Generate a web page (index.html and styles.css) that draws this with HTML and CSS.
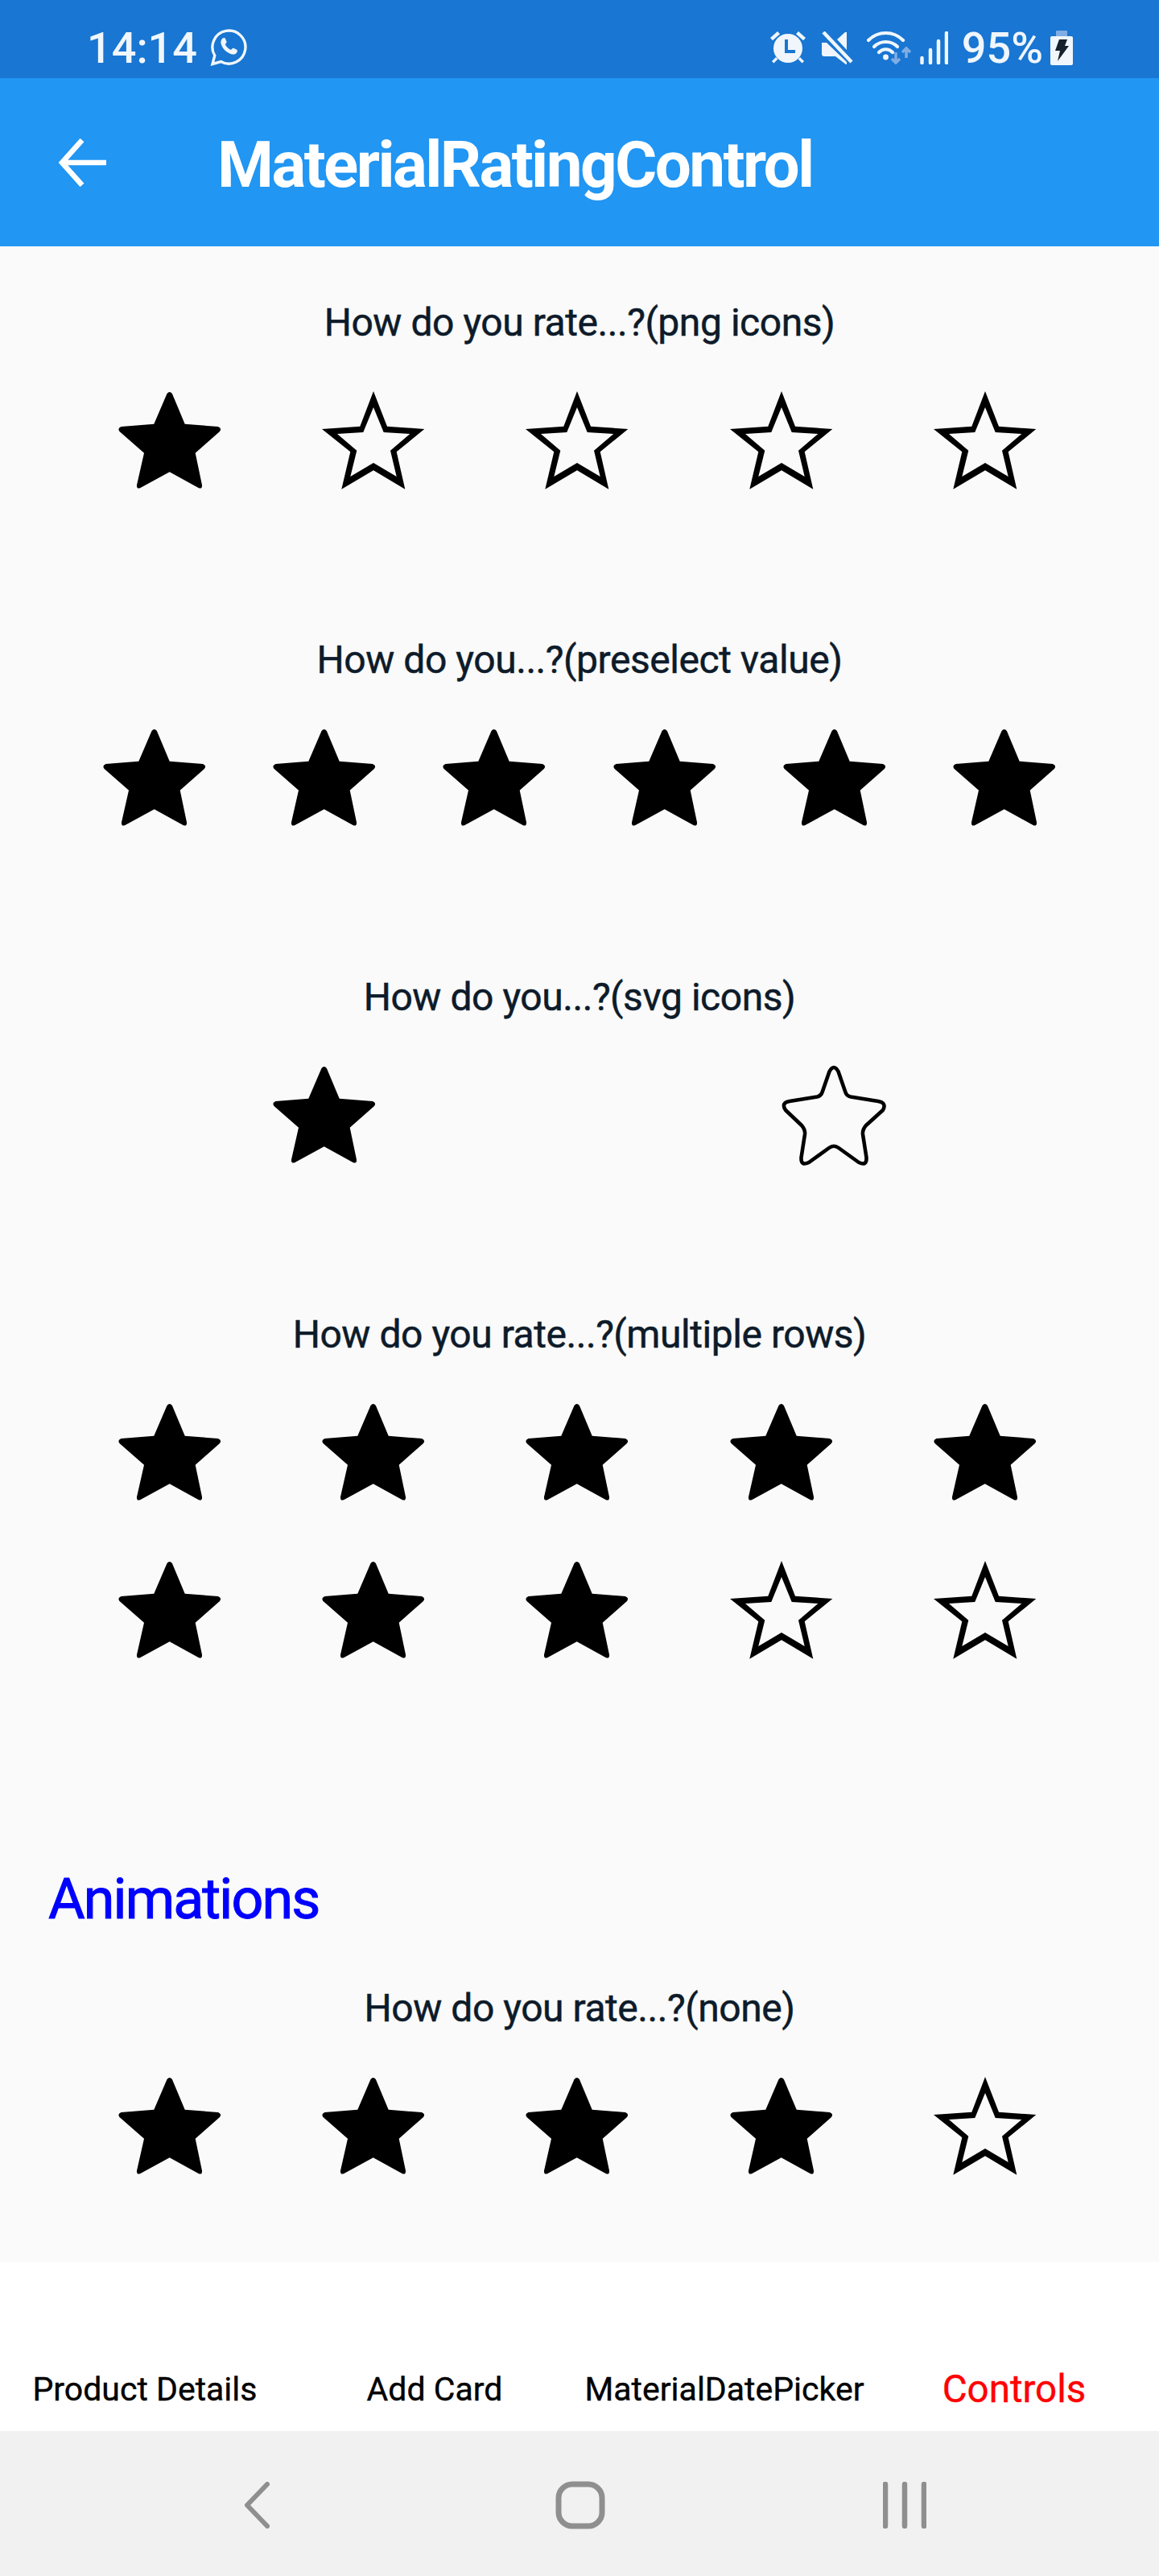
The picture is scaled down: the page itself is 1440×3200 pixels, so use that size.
FILE: index.html
```html
<!DOCTYPE html>
<html lang="en">
<head>
<meta charset="utf-8">
<title>MaterialRatingControl</title>
<link rel="stylesheet" href="styles.css">
</head>
<body>
<svg class="defs" width="0" height="0" aria-hidden="true">
  <symbol id="star-filled" viewBox="0 0 128 121" overflow="visible">
    <path d="M60.5 3Q63.7-1 66.9 3L82.7 40.7 124 44Q129 46 126 50L95.7 76.7 104 116.5Q104.5 122 99.5 120L63.7 100.3 27.5 120Q22.5 122 23 116.5L32 76.7 1.5 50Q-1.5 46 3.5 44L44.3 40.7Z"/>
  </symbol>
  <symbol id="star-outline" viewBox="0 0 128 121" overflow="visible">
    <path fill-rule="evenodd" d="M64 0 81 43.7 127.3 47 92.7 75.3 103.3 121.7 64 98.3 24.3 121.7 35.3 75.3 0 47 47.3 43.7ZM64 20 51.3 51 19 53 43.3 73.7 35.3 106 64 89 92.7 106 85 73.7 109.3 53 76.7 51Z"/>
  </symbol>
  <symbol id="star-svg" viewBox="0 0 128 121" overflow="visible">
    <path fill="none" stroke="#000" stroke-width="4.6" stroke-linejoin="round" d="M57.5 7Q63-3 68.5 7L77.5 33Q79 37.5 84 38.5L118 44Q129 46 124 55L103 74Q98.5 79 99 85L103.5 114Q104 125 94 120L69 102Q63 97.5 57 102L32 120Q22 125 22.500 114L27 85Q27.500 79 23 74L3 55Q-3 46 8 44L42 38.500Q47 37.500 48.500 33Z"/>
  </symbol>
</svg>

<header class="status-bar">
  <div class="status-left">
    <span class="status-text">14:14</span>
    <svg class="icon-whatsapp" viewBox="0 0 46 46"><path fill="none" stroke="#f0f6fc" stroke-width="3.400" d="M3 43.500l2.800-10.500A20.500 20.500 0 1 1 13.500 40.500Z"/><path fill="#f0f6fc" d="M15.500 11.500c1.500-1 3-.8 3.600.8l1.300 3.300c.3.800 0 1.500-.5 2.100l-1.200 1.300c1.600 3.200 3.800 5.400 7.300 7l1.500-1.700c.6-.6 1.300-.7 2-.4l3.300 1.600c1 .5 1.300 1.300 1 2.400-.8 2.800-3.600 4.200-6.400 3.500-6.800-1.800-11.800-6.600-13.800-13-.7-2.700 0-5.200 1.900-6.700Z"/></svg>
  </div>
  <div class="status-right">
    <svg class="icon-alarm" viewBox="0 0 44 40"><g fill="#f0f6fc"><circle cx="22" cy="21" r="18"/><path d="M0 8 9 0l3 3.200-9 8ZM44 8 35 0l-3 3.200 9 8ZM2 37l5-5 2.400 2.600-5 5ZM42 37l-5-5-2.400 2.600 5 5Z"/></g><path fill="none" stroke="#1976d2" stroke-width="4" d="M20 10v15h11"/></svg>
    <svg class="icon-mute" viewBox="0 0 39 41"><path fill="#f0f6fc" d="M0 14h6l25 24v3l-1 0-13-10H3q-3 0-3-3ZM19 10 29 1h2v22Z"/><path fill="none" stroke="#f0f6fc" stroke-width="4.500" d="M2 1 37 38"/></svg>
    <svg class="icon-wifi" viewBox="0 0 56 42"><g fill="none" stroke="#f0f6fc" stroke-width="4.200" stroke-linecap="round"><path d="M2 12C14 0 33 0 45 12"/><path d="M9 20c8-8 21-8 29 0"/><path d="M15 27c5-5 12-5 17 0"/></g><circle cx="23.500" cy="33" r="3.400" fill="#f0f6fc"/><g fill="none" stroke="#80ade4" stroke-width="3.500"><path d="M36 27v13M31 35l5 5 5-5"/><path d="M49 34V22M44 27l5-5 5 5"/></g></svg>
    <svg class="icon-signal" viewBox="0 0 35 41"><g fill="none" stroke="#f0f6fc" stroke-width="4.500" stroke-linecap="round"><path d="M2.500 33v6M13 23v16M23 12v27M33 2v37"/></g></svg>
    <span class="status-text battery-text">95%</span>
    <svg class="icon-battery" viewBox="0 0 28 43"><path fill="#80ade4" d="M8 0h12q1 0 1 1v6H7V1q0-1 1-1Z"/><path fill="#f0f6fc" d="M2 7h24q2 0 2 2v32q0 2-2 2H2q-2 0-2-2V9q0-2 2-2Z"/><path fill="#16202c" d="M11 11h10l-3 8h5L9 38l3-13H6Z"/></svg>
  </div>
</header>

<div class="app-bar">
  <svg class="icon-back" viewBox="0 0 60 60"><path fill="none" stroke="#fff" stroke-width="6.500" d="M60 30H5M30 2 5 30l25 28" stroke-linejoin="miter"/></svg>
  <h1 class="title">MaterialRatingControl</h1>
</div>

<main class="content">
  <section class="rating">
    <p class="question">How do you rate...?(png icons)</p>
    <div class="stars five">
      <span class="cell"><svg class="star"><use href="#star-filled"/></svg></span>
      <span class="cell"><svg class="star"><use href="#star-outline"/></svg></span>
      <span class="cell"><svg class="star"><use href="#star-outline"/></svg></span>
      <span class="cell"><svg class="star"><use href="#star-outline"/></svg></span>
      <span class="cell"><svg class="star"><use href="#star-outline"/></svg></span>
    </div>
  </section>
  <section class="rating">
    <p class="question">How do you...?(preselect value)</p>
    <div class="stars six">
      <span class="cell"><svg class="star"><use href="#star-filled"/></svg></span>
      <span class="cell"><svg class="star"><use href="#star-filled"/></svg></span>
      <span class="cell"><svg class="star"><use href="#star-filled"/></svg></span>
      <span class="cell"><svg class="star"><use href="#star-filled"/></svg></span>
      <span class="cell"><svg class="star"><use href="#star-filled"/></svg></span>
      <span class="cell"><svg class="star"><use href="#star-filled"/></svg></span>
    </div>
  </section>
  <section class="rating">
    <p class="question">How do you...?(svg icons)</p>
    <div class="stars two">
      <span class="cell"><svg class="star"><use href="#star-filled"/></svg></span>
      <span class="cell"><svg class="star"><use href="#star-svg"/></svg></span>
    </div>
  </section>
  <section class="rating">
    <p class="question">How do you rate...?(multiple rows)</p>
    <div class="stars five">
      <span class="cell"><svg class="star"><use href="#star-filled"/></svg></span>
      <span class="cell"><svg class="star"><use href="#star-filled"/></svg></span>
      <span class="cell"><svg class="star"><use href="#star-filled"/></svg></span>
      <span class="cell"><svg class="star"><use href="#star-filled"/></svg></span>
      <span class="cell"><svg class="star"><use href="#star-filled"/></svg></span>
      <span class="cell"><svg class="star"><use href="#star-filled"/></svg></span>
      <span class="cell"><svg class="star"><use href="#star-filled"/></svg></span>
      <span class="cell"><svg class="star"><use href="#star-filled"/></svg></span>
      <span class="cell"><svg class="star"><use href="#star-outline"/></svg></span>
      <span class="cell"><svg class="star"><use href="#star-outline"/></svg></span>
    </div>
  </section>
  <h2 class="heading">Animations</h2>
  <section class="rating">
    <p class="question">How do you rate...?(none)</p>
    <div class="stars five">
      <span class="cell"><svg class="star"><use href="#star-filled"/></svg></span>
      <span class="cell"><svg class="star"><use href="#star-filled"/></svg></span>
      <span class="cell"><svg class="star"><use href="#star-filled"/></svg></span>
      <span class="cell"><svg class="star"><use href="#star-filled"/></svg></span>
      <span class="cell"><svg class="star"><use href="#star-outline"/></svg></span>
    </div>
  </section>
</main>

<nav class="tabs">
  <span class="tab">Product Details</span>
  <span class="tab">Add Card</span>
  <span class="tab">MaterialDatePicker</span>
  <span class="tab tab-active">Controls</span>
</nav>

<footer class="nav-bar">
  <svg class="nav-back" viewBox="0 0 32 58"><path fill="none" stroke="#8f8f8f" stroke-width="6" stroke-linecap="round" stroke-linejoin="round" d="M29 3 4 29l25 26"/></svg>
  <svg class="nav-home" viewBox="0 0 62 60"><rect x="4" y="4" width="54" height="52" rx="17" fill="none" stroke="#8f8f8f" stroke-width="7"/></svg>
  <svg class="nav-recents" viewBox="0 0 54 58"><path fill="none" stroke="#8f8f8f" stroke-width="6.500" stroke-linecap="round" d="M3 3v52M27 3v52M51 3v52"/></svg>
</footer>
</body>
</html>
```

FILE: styles.css
```css
* { box-sizing: border-box; }
html, body { margin: 0; padding: 0; }
body {
  width: 1440px;
  height: 3200px;
  display: flex;
  flex-direction: column;
  overflow: hidden;
  font-family: Roboto, "Liberation Sans", sans-serif;
  background: #fafafa;
}
.defs { display: block; height: 0; width: 0; }

.status-bar {
  flex: 0 0 97px;
  display: flex;
  justify-content: space-between;
  align-items: center;
  padding: 21px 107px 0 108px;
  background: #1976d2;
  color: #f0f6fc;
}
.status-left, .status-right { display: flex; align-items: center; }
.status-text { font-size: 54px; line-height: 60px; margin-top: 2px; font-weight: 500; }
.icon-whatsapp { width: 46px; height: 46px; margin-left: 16px; }
.icon-alarm { width: 44px; height: 40px; }
.icon-mute { width: 39px; height: 41px; margin-left: 20px; }
.icon-wifi { width: 56px; height: 42px; margin-left: 17px; }
.icon-signal { width: 35px; height: 41px; margin-left: 10px; }
.battery-text { margin-left: 17px; }
.icon-battery { width: 28px; height: 43px; margin-left: 9px; }

.app-bar {
  flex: 0 0 209px;
  display: flex;
  align-items: center;
  padding-left: 72px;
  background: #2196f3;
}
.icon-back { width: 60px; height: 60px; }
.title {
  margin: 6px 0 0 138px;
  font-size: 80px;
  line-height: 90px;
  font-weight: 700;
  color: #fff;
  letter-spacing: -2.6px;
}

.content { flex: 0 0 2504px; min-height: 0; overflow: hidden; padding-top: 65px; background: #fafafa; }
.rating { margin-bottom: 156px; }
.question {
  margin: 0 0 27px;
  text-align: center;
  font-size: 48px;
  line-height: 60px;
  font-weight: 400;
  letter-spacing: -0.45px;
  -webkit-text-stroke: 0.5px #0d1b2a;
  color: #0d1b2a;
}
.stars {
  display: grid;
  row-gap: 20px;
  padding: 0 86.5px;
}
.five { grid-template-columns: repeat(5, 1fr); padding: 0 89px 0 84px; }
.six { grid-template-columns: repeat(6, 1fr); }
.two { grid-template-columns: repeat(2, 317px); justify-content: center; column-gap: 317px; padding: 0; }
.cell {
  height: 176px;
  display: flex;
  align-items: center;
  justify-content: center;
}
.star { width: 128px; height: 121px; overflow: visible; fill: #000; }
.heading {
  margin: 232px 0 66px 60px;
  font-size: 70px;
  line-height: 80px;
  font-weight: 400;
  letter-spacing: -1.9px;
  -webkit-text-stroke: 1px #0000ff;
  color: #0000ff;
}

.tabs {
  flex: 0 0 210px;
  display: grid;
  grid-template-columns: repeat(4, 360px);
  align-items: end;
  padding-bottom: 28px;
  background: #fff;
}
.tab {
  text-align: center;
  font-size: 41px;
  line-height: 48px;
  -webkit-text-stroke: 0.4px #000;
  color: #000;
}
.tab-active { font-size: 47.5px; color: #f00; -webkit-text-stroke: 0.4px #f00; }

.nav-bar {
  flex: 0 0 180px;
  display: grid;
  grid-template-columns: repeat(3, auto);
  align-items: center;
  justify-content: start;
  padding: 4px 0 0 303px;
  background: #f1f1f1;
}
.nav-back { width: 32px; height: 58px; }
.nav-home { width: 62px; height: 60px; margin-left: 355px; }
.nav-recents { width: 54px; height: 58px; margin-left: 345px; }
```
